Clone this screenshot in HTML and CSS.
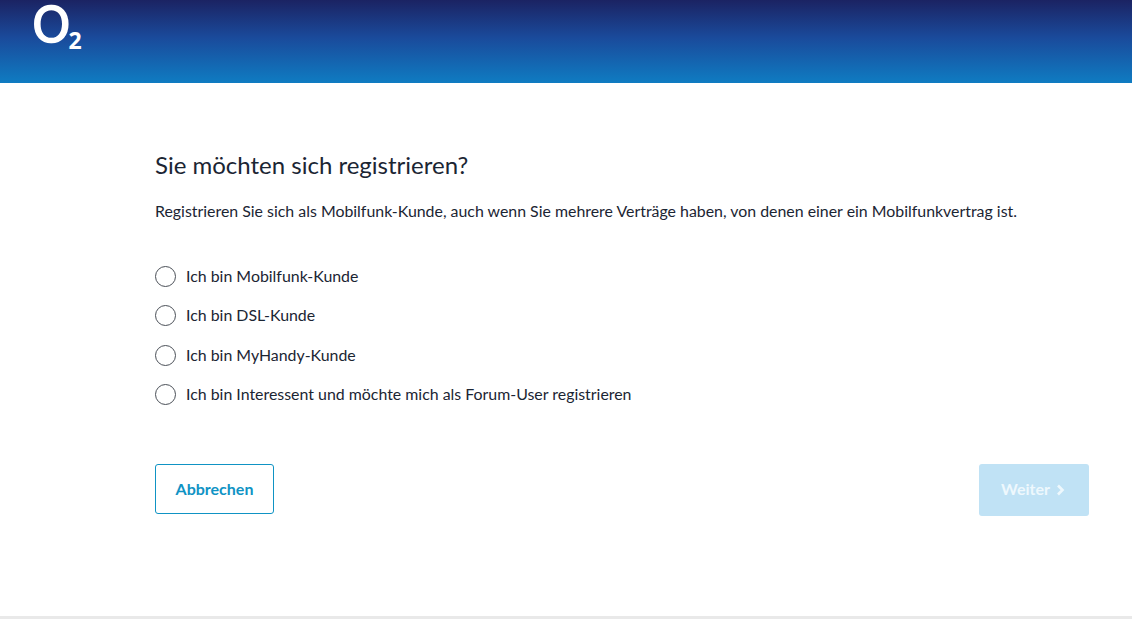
FILE: index.html
```html
<!DOCTYPE html>
<html lang="de">
<head>
  <meta charset="UTF-8" />
  <title>Registrierung</title>
  <link rel="stylesheet" href="styles.css">
</head>
<body>

<header class="header">
  <div class="logo"><span class="logo-o">O</span><span class="logo-two">2</span></div>
</header>

<main class="content">
  <h1 class="title">Sie möchten sich registrieren?</h1>
  <p class="intro">Registrieren Sie sich als Mobilfunk-Kunde, auch wenn Sie mehrere Verträge haben, von denen einer ein Mobilfunkvertrag ist.</p>

  <div class="options">
    <label class="option"><input type="radio" name="kunde"><span class="radio"></span>Ich bin Mobilfunk-Kunde</label>
    <label class="option"><input type="radio" name="kunde"><span class="radio"></span>Ich bin DSL-Kunde</label>
    <label class="option"><input type="radio" name="kunde"><span class="radio"></span>Ich bin MyHandy-Kunde</label>
    <label class="option"><input type="radio" name="kunde"><span class="radio"></span>Ich bin Interessent und möchte mich als Forum-User registrieren</label>
  </div>

  <div class="actions">
    <button class="btn btn-cancel">Abbrechen</button>
    <button class="btn btn-next" disabled>Weiter
      <svg class="chevron" width="12" height="14" viewBox="0 0 12 14"><path d="M3 2.5 7.5 7 3 11.5" fill="none" stroke="#eef8fd" stroke-width="2.6"/></svg>
    </button>
  </div>
</main>

<footer class="footer"></footer>

</body>
</html>
```

FILE: styles.css
```css
body {
  margin: 0;
  background: #fff;
  color: #1b2533;
  font-family: Lato, "Open Sans", sans-serif;
  height: 619px;
  overflow: hidden;
  display: flex;
  flex-direction: column;
}

.header {
  height: 83px;
  padding-left: 32px;
  background: linear-gradient(180deg, #1b2363 0%, #1a4a9b 45%, #0f7cc2 100%);
}

.logo {
  display: flex;
  align-items: flex-start;
  padding-top: 1px;
  color: #fff;
}

.logo-o {
  font-family: "DejaVu Sans", sans-serif;
  font-size: 49px;
  line-height: 1;
  letter-spacing: -2px;
  -webkit-text-stroke: 1.4px #fff;
}

.logo-two {
  font-family: "Open Sans", sans-serif;
  font-size: 23px;
  font-weight: 700;
  line-height: 1;
  margin-top: 28px;
}

.content {
  flex: 1;
  padding: 68px 43px 0 155px;
}

.title {
  margin: 0;
  font-size: 24px;
  font-weight: 400;
  line-height: 28px;
}

.intro {
  margin: 22px 0 0;
  font-size: 15.9px;
  line-height: 20px;
}

.options {
  margin-top: 39.2px;
  display: flex;
  flex-direction: column;
  gap: 9.5px;
}

.option {
  display: flex;
  align-items: center;
  gap: 10px;
  height: 30px;
  font-size: 15.9px;
  cursor: pointer;
}

.option input {
  display: none;
}

.radio {
  width: 19px;
  height: 19px;
  margin-top: 2px;
  border: 1px solid #4a4f57;
  border-radius: 50%;
}

.actions {
  margin-top: 55.3px;
  display: flex;
  justify-content: space-between;
  align-items: flex-start;
}

.btn {
  font-family: inherit;
  font-size: 16px;
  font-weight: 700;
  border-radius: 3px;
  cursor: pointer;
}

.btn-cancel {
  width: 119px;
  height: 50px;
  padding: 0 0 1px;
  background: #fff;
  color: #0f93c4;
  border: 1px solid #0f93c4;
}

.btn-next {
  width: 110px;
  height: 52px;
  padding: 0 0 3px;
  background: #c0e2f5;
  color: #eef8fd;
  border: none;
  display: flex;
  align-items: center;
  justify-content: center;
  gap: 5px;
}

.chevron {
  margin-top: 4px;
}

.footer {
  height: 3px;
  background: #e9e9e9;
}
```
